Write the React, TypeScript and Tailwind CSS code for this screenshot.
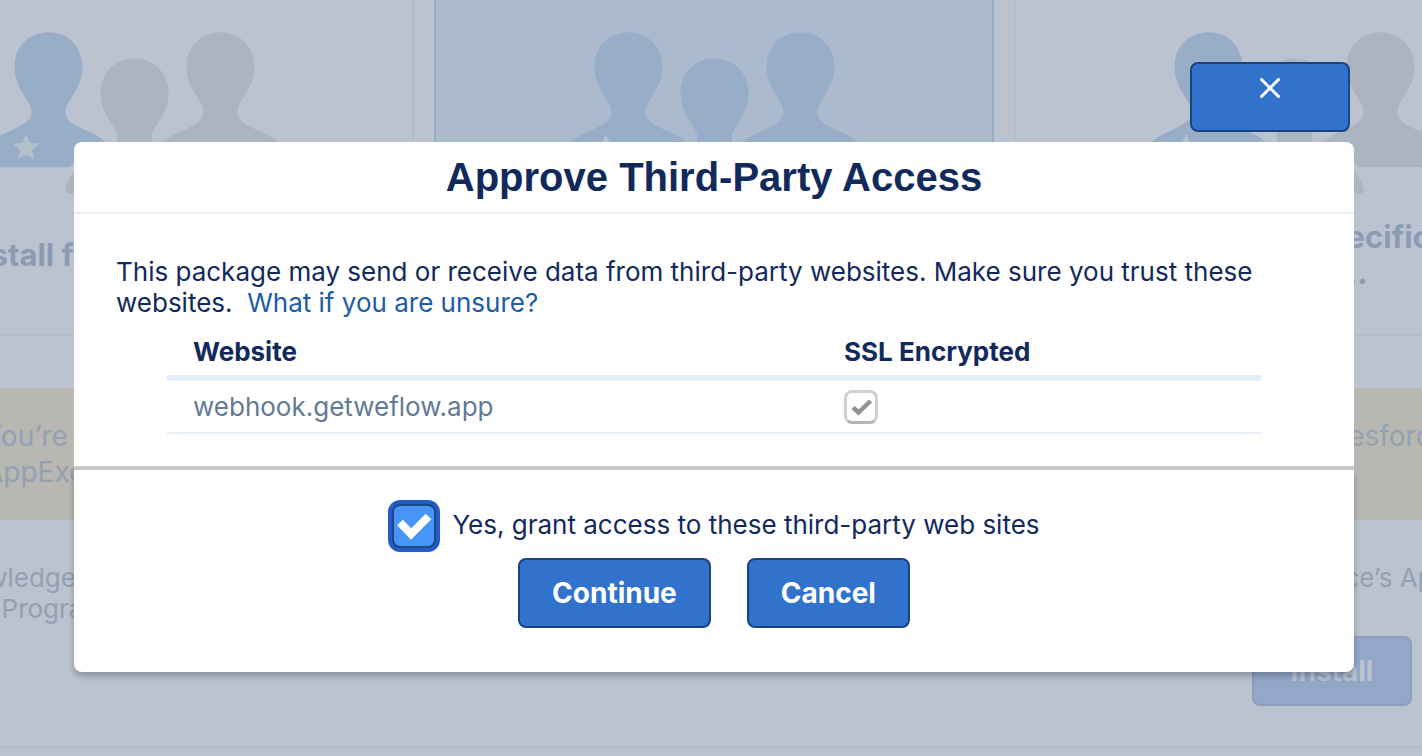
import { useState } from "react";
import type { ReactNode } from "react";

const PERSON_PATH =
  "M0 0C20 0 34 15 34 34C34 47 29 56 22 67C18 73 17 76 17 80C17 90 30 95 44 101C58 108 65 116 69 130C70 133 68 135 66 135H-66C-68 135 -70 133 -69 130C-65 116 -58 108 -44 101C-30 95 -17 90 -17 80C-17 76 -18 73 -22 67C-29 56 -34 47 -34 34C-34 15 -20 0 0 0Z";

type InstallOption = {
  id: string;
  label?: string;
  selected?: boolean;
};

const OPTIONS: InstallOption[] = [
  { id: "admins", label: "Install for Admins Only" },
  { id: "all", selected: true },
  { id: "profiles", label: "Install for Specific\nProfiles..." },
];

const WEBSITES = [{ host: "webhook.getweflow.app", ssl: true }];

function PeopleIcon({ selected }: { selected?: boolean }) {
  const crowd = selected ? "#98aec8" : "#abb5c1";
  const gap = selected ? "#abbacc" : "#bbc3d0";
  return (
    <svg viewBox="0 0 320 164" className="h-[164px] w-80 shrink-0" aria-hidden="true">
      <path d={PERSON_PATH} transform="translate(74.500 .3)" fill="#98aec8" />
      <path d={PERSON_PATH} transform="translate(246.500 .3)" fill={crowd} />
      <path
        d="M52 102l4 9 9 .6-7 6.4 2.4 9.5-8.4-5-8.4 5 2.4-9.5-7-6.4 9-.6z"
        fill="#b3c1cd"
      />
      <path
        d={PERSON_PATH}
        transform="translate(160.500 26.500)"
        fill={crowd}
        stroke={gap}
        strokeWidth="12"
        paintOrder="stroke"
      />
    </svg>
  );
}

function OptionCard({ option }: { option: InstallOption }) {
  return (
    <div
      className={`flex h-[336px] w-[560px] shrink-0 flex-col items-center border-x-2 border-b-2 pt-8 ${
        option.selected ? "border-[#97aec8] bg-[#abbacc]" : "border-[#b2bdcb]"
      }`}
    >
      <PeopleIcon selected={option.selected} />
      {option.label && (
        <div className="flex h-[118px] items-center justify-center text-center text-[31px] leading-9 font-bold whitespace-pre text-[#8c9bb4]">
          {option.label}
        </div>
      )}
    </div>
  );
}

function InstallPage() {
  return (
    <div className="min-h-screen overflow-hidden bg-[#bbc3d0]">
      <div className="flex justify-center gap-5 pl-1.5">
        {OPTIONS.map((option) => (
          <OptionCard key={option.id} option={option} />
        ))}
      </div>

      {/* Warning banner */}
      <div className="mt-[52px] flex justify-between bg-[#b9b7b1] py-[30px] text-[28px] leading-9 text-[#93a1b3]">
        <div className="-ml-4">
          <p>You’re</p>
          <p>AppExchange</p>
        </div>
        <p className="-mr-[26px]">Salesforce</p>
      </div>

      <div className="flex justify-between pt-[42px] text-[26px] leading-[31px] text-[#93a1b3]">
        <div className="-ml-24">
          <p className="pl-2">acknowledge</p>
          <p>Partner Program</p>
        </div>
        <p className="-mr-[148px]">Salesforce’s AppExchange</p>
      </div>

      <div className="flex justify-end border-b-2 border-[#b5becb] pt-3 pr-2.5 pb-10">
        <button
          type="button"
          className="h-[70px] w-40 rounded-lg border-2 border-[#8b9eba] bg-[#93a8c8] text-[28px] font-bold text-[#bbc3d0]"
        >
          Install
        </button>
      </div>
    </div>
  );
}

function ActionButton({ children }: { children: ReactNode }) {
  return (
    <button
      type="button"
      className="h-[70px] rounded-lg border-2 border-[#1a4380] bg-[#3173cc] px-8 text-[28px] font-bold text-white"
    >
      {children}
    </button>
  );
}

function WebsiteTable() {
  return (
    <table className="w-full table-fixed border-collapse text-left text-[26px] leading-[31px]">
      <thead>
        <tr className="h-[50px] border-b-6 border-[#e5eef7] text-[#12295c]">
          <th className="w-[651px] pl-[26px] font-bold">Website</th>
          <th className="pl-[26px] font-bold">SSL Encrypted</th>
        </tr>
      </thead>
      <tbody>
        {WEBSITES.map((site) => (
          <tr key={site.host} className="h-[55px] border-b-2 border-[#e5eef7] text-[#637a94]">
            <td className="pl-[26px]">{site.host}</td>
            <td className="pl-[26px]">
              <span className="grid size-[34px]">
                <input
                  type="checkbox"
                  aria-label={`${site.host} SSL encrypted`}
                  checked={site.ssl}
                  readOnly
                  className="col-start-1 row-start-1 size-[34px] appearance-none rounded-lg border-3 border-[#d0d0d0] border-b-[#b5b5b5] bg-white"
                />
                <svg viewBox="0 0 34 34" className="pointer-events-none col-start-1 row-start-1" aria-hidden="true">
                  <path d="M9 17.500L14.500 22.500L26.500 11" fill="none" stroke="#929292" strokeWidth="4.500" />
                </svg>
              </span>
            </td>
          </tr>
        ))}
      </tbody>
    </table>
  );
}

function ApproveDialog() {
  const [granted, setGranted] = useState(true);
  return (
    <div className="absolute inset-0 flex flex-col items-center pt-[62px] pl-1.5">
      <div className="flex w-full max-w-7xl flex-col">
        <button
          type="button"
          aria-label="Close"
          className="mr-1 mb-2.5 flex h-[70px] w-40 justify-center self-end rounded-lg border-2 border-[#1a4380] bg-[#3173cc] pt-3.5"
        >
          <svg viewBox="0 0 20 20" className="size-5" aria-hidden="true">
            <path d="M1.500 1.500L18.500 18.500M18.500 1.500L1.500 18.500" stroke="#fff" strokeWidth="3" strokeLinecap="round" />
          </svg>
        </button>

        <div role="dialog" aria-labelledby="dialog-title" className="rounded-lg bg-white">
          <h2
            id="dialog-title"
            className="border-b-2 border-[#e5eef7] py-3 text-center font-['Liberation_Sans',Arial,sans-serif] text-[40px] leading-[46px] font-bold text-[#12295c]"
          >
            Approve Third-Party Access
          </h2>

          <div className="border-b-4 border-[#c9c9c9] px-[42px] pt-[42px] pb-8">
            <p className="text-[26px] leading-[31px] text-[#12295c]">
              This package may send or receive data from third-party websites. Make sure you trust these websites.&nbsp;{" "}
              <a href="#" className="text-[#205ba7]">
                What if you are unsure?
              </a>
            </p>
            <div className="mt-2.5 px-[51px]">
              <WebsiteTable />
            </div>
          </div>

          <div className="rounded-b-lg pt-[30px] pb-11 shadow-[0_4px_6px_rgba(0,0,0,0.25)]">
            <div className="flex items-center justify-center gap-3">
              <span className="grid size-[52px]">
                <input
                  id="grant-access"
                  type="checkbox"
                  checked={granted}
                  onChange={(e) => setGranted(e.target.checked)}
                  className="col-start-1 row-start-1 m-1 appearance-none rounded-lg border-2 border-[#1b4787] bg-[#4596f7] ring-4 ring-[#265bc6]"
                />
                {granted && (
                  <svg viewBox="0 0 52 52" className="pointer-events-none col-start-1 row-start-1" aria-hidden="true">
                    <path d="M12 22.500L23 34L40.500 16.500" fill="none" stroke="#fff" strokeWidth="8" />
                  </svg>
                )}
              </span>
              <label htmlFor="grant-access" className="pb-1 text-[26px] leading-[31px] text-[#12295c]">
                Yes, grant access to these third-party web sites
              </label>
            </div>
            <div className="mt-1.5 flex justify-center gap-9">
              <ActionButton>Continue</ActionButton>
              <ActionButton>Cancel</ActionButton>
            </div>
          </div>
        </div>
      </div>
    </div>
  );
}

export default function App() {
  return (
    <div className="relative overflow-hidden font-['Inter',sans-serif]">
      <InstallPage />
      <ApproveDialog />
    </div>
  );
}
